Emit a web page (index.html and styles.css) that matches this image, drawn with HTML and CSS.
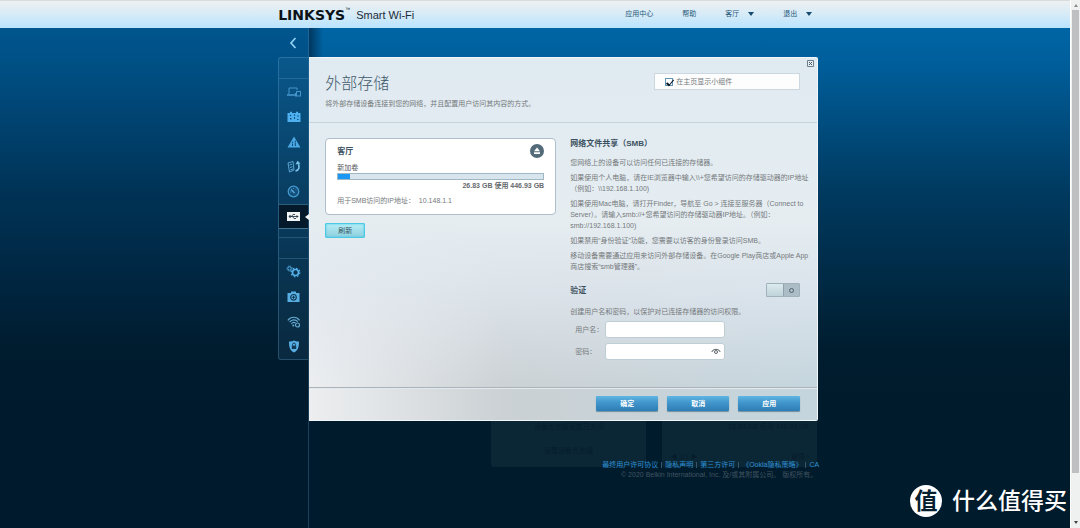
FILE: index.html
```html
<!DOCTYPE html>
<html lang="zh-CN">
<head>
<meta charset="utf-8">
<title>Linksys Smart Wi-Fi</title>
<link rel="stylesheet" href="styles.css">
</head>
<body>
<div class="window">
  <div class="page">
    <header class="topbar">
      <div class="topbar-inner">
        <div class="brand"><span class="brand-name">LINKSYS</span><sup class="brand-tm">™</sup><span class="brand-product">Smart Wi-Fi</span></div>
        <nav class="topnav">
          <a href="#">应用中心</a>
          <a href="#">帮助</a>
          <button type="button">客厅<span class="caret"></span></button>
          <button type="button">退出<span class="caret"></span></button>
        </nav>
      </div>
    </header>

    <div class="main">
      <aside class="side">
        <div class="rail-col">
          <button class="back" type="button" aria-label="返回">
            <svg width="8" height="12" viewBox="0 0 8 12"><path d="M6.500 1 2 6l4.500 5" fill="none" stroke="#8fd0f5" stroke-width="1.700"/></svg>
          </button>
          <nav class="rail">
            <div class="rail-gap"></div>
            <a href="#" aria-label="设备列表"><svg width="14" height="12" viewBox="0 0 14 12"><g fill="none" stroke="#4596cd"><path d="M2 8V2h8v2"/><path d="M0 9h9" stroke-width="1.600"/><rect x="9.500" y="5.500" width="4" height="4.500"/><path d="M8.500 7v3.500"/></g></svg></a>
            <a href="#" aria-label="访客访问"><svg width="14" height="12" viewBox="0 0 14 12"><path d="M.5 2H3V.8h2V2h4V.8h2V2h2.500v9H.5z" fill="#4fb0f0"/><g fill="#0e5486"><circle cx="3.500" cy="4.500" r=".8"/><circle cx="7.500" cy="4" r=".8"/><circle cx="11" cy="5" r=".8"/><path d="M3 7h1.500v1.500H3zM7 6h1v2H7zM10 8h1.500v1H10z"/></g></svg></a>
            <a href="#" aria-label="家长控制"><svg width="14" height="12" viewBox="0 0 14 12"><path d="M7 .5 13.500 11.500H.5z" fill="#4ba8e4"/><g fill="#0d4a77"><circle cx="5.500" cy="6.300" r=".7"/><circle cx="8.300" cy="5.200" r=".7"/><path d="M5 7.500h1V10H5zM7.800 6.500h1V10h-1z"/></g></svg></a>
            <a href="#" aria-label="介质优先级"><svg width="14" height="13" viewBox="0 0 14 13"><path d="m1 3 5-1.500L7 10l-4.500 2z" fill="none" stroke="#5ba6d4"/><path d="m2.500 5 2.500-.8M3 7.500l2.500-.8M3.500 9.800 6 9" stroke="#5ba6d4"/><path d="M8.500 11c4-1 4-4 3-7" fill="none" stroke="#7cc2ec" stroke-width="1.600"/><path d="M8.500 4.500 10.500.8l3 2.800z" fill="#7cc2ec"/></svg></a>
            <a href="#" aria-label="速度测试"><svg width="13" height="13" viewBox="0 0 13 13"><circle cx="6.500" cy="6.500" r="5.300" fill="#15507b" stroke="#459bd3" stroke-width="1.200"/><path d="M4 4.500 7.500 8" stroke="#5ab2e8" stroke-width="1.300"/><path d="M3 7h1M6.500 3v1M9 4.500l.7-.7" stroke="#459bd3" stroke-width=".8"/></svg></a>
            <a href="#" class="active" aria-label="外部存储"><svg width="13" height="9" viewBox="0 0 13 9"><path d="M0 0h13v9H0z" fill="#f2f5f6"/><path d="M2 4.500h9M4.500 4.500 6 2.500h2M5.500 4.500 7 6.500h2" fill="none" stroke="#2a3e4b" stroke-width=".9"/><circle cx="3" cy="4.500" r="1.200" fill="#2a3e4b"/><path d="m9.500 3 2.200 1.500L9.500 6z" fill="#2a3e4b"/></svg></a>
            <div class="rail-strip"></div>
            <div class="rail-gap"></div>
            <a href="#" aria-label="连接"><svg width="15" height="13" viewBox="0 0 15 13"><g fill="none" stroke="#58b2ec"><circle cx="3.500" cy="3.500" r="1.700"/><circle cx="3.500" cy="3.500" r="2.600" stroke-width=".8" stroke-dasharray="1 1.040"/><circle cx="9.500" cy="7.500" r="3" stroke-width="1.600"/><circle cx="9.500" cy="7.500" r="4.300" stroke-width="1.200" stroke-dasharray="1.600 1.780"/></g></svg></a>
            <a href="#" aria-label="故障排除"><svg width="13" height="11" viewBox="0 0 13 11"><path d="M.5 2H4V.5h5V2h3.500v9H.5z" fill="#58aee3"/><circle cx="6.500" cy="6.300" r="2.800" fill="none" stroke="#123a57" stroke-width="1.200"/><path d="M5 6.300h3M6.500 4.800v3" stroke="#123a57"/></svg></a>
            <a href="#" aria-label="无线"><svg width="14" height="12" viewBox="0 0 14 12"><g fill="none" stroke="#62a8d0" stroke-width="1.200"><path d="M.8 4.300C4 .2 9.500.2 12.500 4.300"/><path d="M2.600 6.100C5 3.200 8.500 3.200 10.800 5.600"/><path d="M4.400 7.800c1.300-1.400 3-1.500 4.100-.7"/><circle cx="10.500" cy="9" r="2"/></g><circle cx="6.300" cy="9.500" r="1" fill="#62a8d0"/></svg></a>
            <a href="#" aria-label="安全"><svg width="12" height="13" viewBox="0 0 12 13"><path d="M1 1.500c2 .3 3.500 0 5-1 1.500 1 3 1.300 5 1 0 6-1 9-5 11-4-2-5-5-5-11z" fill="#58aee3"/><path d="M3.800 5.500h4.400V9H3.800z" fill="#123a57"/><path d="M4.500 5.500V4.400c0-1.800 3-1.800 3 0v1.100" fill="none" stroke="#123a57"/></svg></a>
          </nav>
        </div>
      </aside>

      <div class="stage">
        <section class="dialog">
          <header class="dialog-head">
            <div>
              <h1>外部存储</h1>
              <p class="subtitle">将外部存储设备连接到您的网络，并且配置用户访问其内容的方式。</p>
            </div>
            <label class="widget-toggle"><input type="checkbox" checked>在主页显示小组件</label>
            <button class="close" type="button" aria-label="关闭"><svg width="7" height="7" viewBox="0 0 7 7"><path d="M.5.5h6v6h-6z" fill="#e9eff2" stroke="#6d7f8b"/><path d="m2 2 3 3M5 2 2 5" stroke="#435866"/></svg></button>
          </header>

          <div class="dialog-body">
            <div class="left">
              <article class="drive">
                <div class="drive-head">
                  <h2>客厅</h2>
                  <button class="eject" type="button" aria-label="弹出"><svg width="14" height="14" viewBox="0 0 14 14"><circle cx="7" cy="7" r="7" fill="#536a78"/><path d="m7 3.500 3 3.700H4zM4 8.200h6V10H4z" fill="#fff"/></svg></button>
                </div>
                <p class="volume">新加卷</p>
                <div class="bar"><div class="bar-fill" style="width:6%"></div></div>
                <p class="usage">26.83 GB 使用 446.93 GB</p>
                <p class="ip">用于SMB访问的IP地址： &nbsp;10.148.1.1</p>
              </article>
              <button class="refresh" type="button">刷新</button>
            </div>

            <div class="right">
              <h2>网络文件共享（SMB）</h2>
              <div class="help">
                <p>您网络上的设备可以访问任何已连接的存储器。</p>
                <p>如果使用个人电脑，请在IE浏览器中输入\\+您希望访问的存储驱动器的IP地址<br>（例如：\\192.168.1.100)</p>
                <p>如果使用Mac电脑，请打开Finder，导航至 Go &gt; 连接至服务器（Connect to Server）。请输入smb://+您希望访问的存储驱动器IP地址。（例如： smb://192.168.1.100)</p>
                <p>如果禁用“身份验证”功能，您需要以访客的身份登录访问SMB。</p>
                <p>移动设备需要通过应用来访问外部存储设备。在Google Play商店或Apple App<br>商店搜索“smb管理器”。</p>
              </div>
              <div class="auth-head">
                <h2>验证</h2>
                <button class="switch" type="button" role="switch" aria-checked="false" aria-label="验证"><span class="knob"></span><span class="off"></span></button>
              </div>
              <p class="auth-note">创建用户名和密码，以保护对已连接存储器的访问权限。</p>
              <div class="field">
                <label for="user">用户名：</label>
                <div class="box"><input id="user" type="text"></div>
              </div>
              <div class="field">
                <label for="pass">密码：</label>
                <div class="box"><input id="pass" type="password">
                  <svg width="10" height="7" viewBox="0 0 10 7"><path d="M.7 3.800C3 .3 7 .3 9.300 3.800" fill="none" stroke="#5c6468" stroke-width="1.100"/><circle cx="5" cy="4" r="1.500" fill="none" stroke="#5c6468"/></svg>
                </div>
              </div>
            </div>
          </div>

          <footer class="actions">
            <button type="button">确定</button>
            <button type="button">取消</button>
            <button type="button">应用</button>
          </footer>
        </section>

        <div class="tiles">
          <div class="tile"><p>设备优先级设置已关闭</p><p>设置设备优先级</p></div>
          <div class="tile tile-end"><p>26.83 GB 使用 446.93 GB</p><p class="pager"><span>◀ 1/1 ▶</span><span>管理 ›</span></p></div>
        </div>

        <footer class="legal">
          <nav>
            <a href="#">最终用户许可协议</a><a href="#">隐私声明</a><a href="#">第三方许可</a><a href="#">《Ookla隐私策略》</a><a href="#">CA</a>
          </nav>
          <p>© 2020 Belkin International, Inc. 及/或其附属公司。 版权所有。</p>
        </footer>
      </div>
    </div>

    <div class="stamp"><span class="stamp-mark">值</span><span>什么值得买</span></div>
  </div>

  <div class="scroll">
    <span class="arrow-up"></span>
    <span class="thumb"></span>
    <span class="arrow-down"></span>
  </div>
</div>
</body>
</html>
```
FILE: styles.css
```css
* { box-sizing: border-box; }
body, h1, h2, p { margin: 0; }
body {
  font-family: "Liberation Sans", "Noto Sans CJK SC", sans-serif;
  font-size: 7px;
  line-height: 11px;
  color: #75797c;
}
button {
  font: inherit;
  color: inherit;
  border: 0;
  padding: 0;
  background: none;
  cursor: pointer;
}
a { color: inherit; text-decoration: none; }
svg { display: block; }

.window {
  display: grid;
  grid-template-columns: minmax(0, 1fr) 10px;
  min-height: 100vh;
}
.page {
  position: relative;
  display: flex;
  flex-direction: column;
  background: linear-gradient(180deg, #0065a5 28px, #005f9c 60px, #003a60 190px, #001d2f 350px, #001b2c 400px);
}

/* top bar */
.topbar {
  height: 28px;
  padding-left: 26%;
  border-top: 1px solid #d8dbdc;
  background: linear-gradient(180deg, #edf0f2, #d6ebf7 50%, #b9e3fe);
}
.topbar-inner {
  display: flex;
  justify-content: space-between;
  align-items: center;
  max-width: 534px;
  height: 27px;
}
.brand { display: flex; align-items: center; color: #0b1218; }
.brand-name { font: bold 14px/16px "DejaVu Sans", sans-serif; }
.brand-tm { font-size: 5px; line-height: 5px; align-self: flex-start; }
.brand-product { margin-left: 6px; font-size: 11px; line-height: 16px; color: #1c2b36; }
.topnav { display: flex; align-items: center; gap: 29px; padding-bottom: 2px; color: #1f5878; }
.topnav button { display: flex; align-items: center; gap: 9px; }
.caret {
  border: 3px solid transparent;
  border-top: 4px solid #134c70;
  border-bottom: 0;
}

/* main layout */
.main {
  flex: 1;
  display: grid;
  grid-template-columns: calc(26% + 31px) minmax(0, 1fr);
}
.side {
  display: flex;
  justify-content: flex-end;
  border-right: 1px solid rgba(90, 150, 190, .3);
  background: rgba(0, 25, 50, .2);
}
.rail-col { width: 30px; }
.back {
  display: flex;
  align-items: center;
  justify-content: center;
  width: 100%;
  height: 29px;
}
.rail {
  border: 1px solid rgba(110, 170, 210, .3);
  border-right: 0;
  border-radius: 3px 0 0 3px;
  background: rgba(60, 130, 170, .15);
}
.rail a {
  position: relative;
  display: flex;
  align-items: center;
  justify-content: center;
  height: 25px;
}
.rail-gap { height: 21px; border-bottom: 1px solid rgba(110, 170, 210, .25); }
.rail-strip { height: 9px; border-bottom: 1px solid rgba(110, 170, 210, .25); }
.rail .active {
  border-top: 1px solid #2a5f80;
  border-bottom: 1px solid #44718c;
  background: #04192a;
}
.active::after {
  content: "";
  position: absolute;
  right: -1px;
  border: 3px solid transparent;
  border-right: 4px solid #f0f4f6;
  border-left: 0;
}
.stage {
  padding-top: 29px;
  background: linear-gradient(90deg, rgba(0, 25, 50, .6), transparent 14px);
}

/* dialog */
.dialog {
  max-width: 509px;
  border: 1px solid #f2f6f8;
  border-left: 0;
  border-radius: 0 2px 2px 0;
  background:
    linear-gradient(180deg, #e0eaf1 0, #e5edf1 45%, rgba(225, 232, 240, .75) 65%, rgba(205, 217, 224, 0) 92%),
    linear-gradient(90deg, #eceef0, #e2e5e7 13%, #cbd1d4 38%, #c4d5dd);
}
.dialog-head {
  position: relative;
  display: flex;
  justify-content: space-between;
  align-items: flex-start;
  height: 65px;
  padding: 15px 17px 0 16px;
  border-bottom: 1px solid #c5d3dd;
}
h1 { font-size: 16px; line-height: 22px; font-weight: 300; color: #3f5a6b; }
.subtitle { margin-top: 3px; }
.widget-toggle {
  display: flex;
  align-items: center;
  gap: 3px;
  width: 146px;
  height: 17px;
  padding-left: 10px;
  border: 1px solid #cbd8e1;
  background: #fcfdfc;
}
.widget-toggle input {
  appearance: none;
  width: 8px;
  height: 8px;
  margin: 0;
  border: 1px solid #5f93b4;
  background: #fff;
}
.widget-toggle input:checked::before {
  content: "";
  display: block;
  width: 3px;
  height: 6px;
  margin: -1px 0 0 2px;
  border: solid #0a1a28;
  border-width: 0 1px 2px 0;
  transform: rotate(40deg);
}
.close { position: absolute; top: 2px; right: 3px; }

.dialog-body {
  display: grid;
  grid-template-columns: 231px minmax(0, 230px);
  gap: 14px;
  padding: 15px 16px 27px;
}
h2 { font-size: 8px; line-height: 11px; color: #3b5160; }

.drive {
  padding: 5px 11px 8px;
  border: 1px solid #afbec8;
  border-radius: 4px;
  background: #fff;
}
.drive-head { display: flex; justify-content: space-between; align-items: center; height: 14px; }
.volume { margin-top: 4px; color: #54585b; }
.bar { height: 7px; border: 1px solid #9fb8c5; background: #d9e5ec; }
.bar-fill { height: 100%; background: #1b98f5; }
.usage { text-align: right; font-weight: bold; color: #666a6d; }
.ip { margin-top: 4px; }
.refresh {
  width: 40px;
  height: 15px;
  margin-top: 8px;
  border: 1px solid #4cc9e4;
  border-radius: 1px;
  background: linear-gradient(180deg, #b5edf7, #8fd0de);
  box-shadow: inset 0 0 2px #37c5e6;
  color: #31535f;
}

.help {
  display: flex;
  flex-direction: column;
  gap: 4px;
  margin: 8px -13px 0 0;
}
.auth-head {
  display: flex;
  justify-content: space-between;
  align-items: center;
  margin-top: 11px;
}
.switch {
  display: flex;
  align-items: center;
  width: 34px;
  height: 14px;
  border: 1px solid #9fb2bb;
  border-radius: 1px;
  background: #adbdc5;
}
.knob {
  width: 17px;
  height: 12px;
  border-right: 1px solid #8ea3ad;
  background: linear-gradient(180deg, #dcebee, #bfd3d9);
}
.off {
  width: 5px;
  height: 5px;
  margin-left: 5px;
  border: 1px solid #4f626d;
  border-radius: 50%;
}
.auth-note { margin-top: 9px; }
.field { display: flex; align-items: center; margin-top: 5px; }
.auth-note + .field { margin-top: 4px; }
.field label { width: 35px; padding-left: 5px; }
.box { position: relative; }
.box input {
  display: block;
  width: 120px;
  height: 17px;
  padding: 0 16px 0 4px;
  border: 1px solid #bfcdd4;
  border-radius: 3px;
  background: #fff;
  font: inherit;
}
.box svg { position: absolute; right: 4px; top: 5px; }

.actions {
  display: flex;
  justify-content: flex-end;
  gap: 9px;
  padding: 8px 17px 9px;
  border-top: 1px solid #a9b3b9;
  box-shadow: inset 0 1px #e3e9ec;
}
.actions button {
  width: 62px;
  height: 15px;
  border-radius: 1px;
  background: linear-gradient(180deg, #5fb6e3, #4398cd 40%, #2c7db5);
  box-shadow: 0 1px 1px #718d9c;
  color: #fff;
  font-weight: bold;
}

/* dimmed widgets behind the dialog */
.tiles {
  display: grid;
  grid-template-columns: 155px 155px;
  justify-content: end;
  gap: 16px;
  max-width: 508px;
}
.tile {
  display: flex;
  flex-direction: column;
  justify-content: space-between;
  align-items: center;
  height: 46px;
  padding: 0 8px 11px;
  border-radius: 0 0 3px 3px;
  background: #0b2736;
  color: #071d2b;
}
.tile-end { align-items: flex-end; padding-bottom: 5px; }
.pager { display: flex; justify-content: space-between; width: 100%; }

.legal {
  position: relative;
  max-width: 510px;
  margin-top: -8px;
  text-align: right;
  color: #405361;
}
.legal nav { display: flex; justify-content: flex-end; color: #2d8fd3; }
.legal nav a + a { margin-left: 3px; padding-left: 4px; background: linear-gradient(#35566c, #35566c) 0 3px / 1px 6px no-repeat; }
.legal p { padding-right: 2px; line-height: 9px; }

.stamp {
  position: absolute;
  right: 3px;
  bottom: 11px;
  display: flex;
  align-items: center;
  gap: 10px;
  font-size: 23px;
  line-height: 32px;
  font-weight: 500;
  color: #fff;
}
.stamp-mark {
  width: 32px;
  height: 32px;
  border-radius: 50%;
  background: #fff;
  color: #06202f;
  font-weight: bold;
  text-align: center;
}

/* scrollbar */
.scroll {
  display: flex;
  flex-direction: column;
  align-items: center;
  padding: 4px 1px;
  border-left: 1px solid #fff;
  background: #eff0f0;
}
.arrow-up { border: 2px solid transparent; border-top: 0; border-bottom: 3px solid #8c8c8c; }
.thumb { width: 7px; height: 89%; margin-top: 3px; background: #bebfc0; }
.arrow-down { margin-top: auto; border: 2px solid transparent; border-bottom: 0; border-top: 3px solid #444; }
```
